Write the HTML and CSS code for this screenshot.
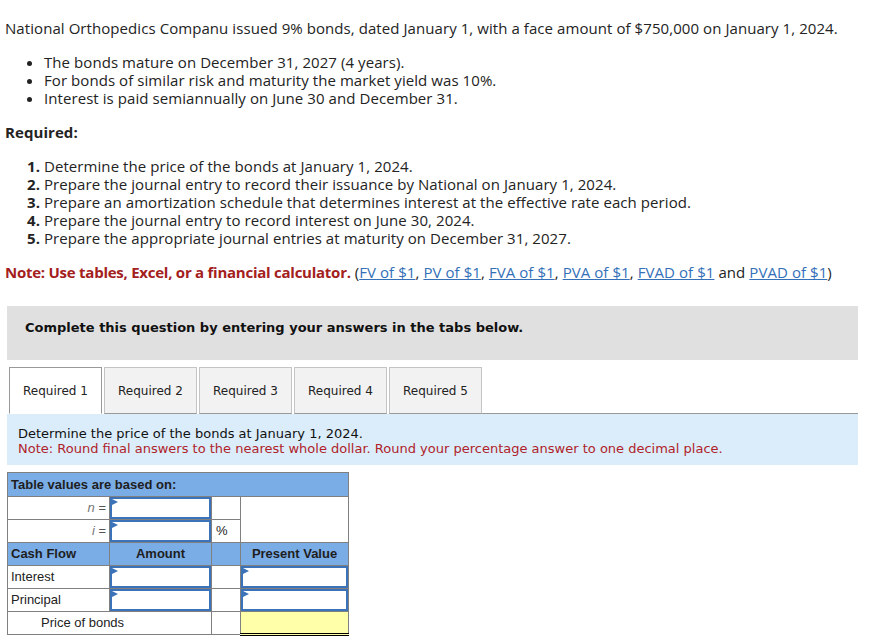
FILE: index.html
```html
<!DOCTYPE html>
<html>
<head>
<meta charset="utf-8">
<link rel="stylesheet" href="styles.css">
</head>
<body>
<div class="page">
  <p class="lead">National Orthopedics Companu issued 9% bonds, dated January 1, with a face amount of $750,000 on January 1, 2024.</p>
  <ul class="facts">
    <li>The bonds mature on December 31, 2027 (4 years).</li>
    <li>For bonds of similar risk and maturity the market yield was 10%.</li>
    <li>Interest is paid semiannually on June 30 and December 31.</li>
  </ul>
  <p class="req-title">Required:</p>
  <ol class="reqs">
    <li>Determine the price of the bonds at January 1, 2024.</li>
    <li>Prepare the journal entry to record their issuance by National on January 1, 2024.</li>
    <li>Prepare an amortization schedule that determines interest at the effective rate each period.</li>
    <li>Prepare the journal entry to record interest on June 30, 2024.</li>
    <li>Prepare the appropriate journal entries at maturity on December 31, 2027.</li>
  </ol>
  <p class="note"><strong class="note-red">Note: Use tables, Excel, or a financial calculator.</strong> (<a href="#">FV of $1</a>, <a href="#">PV of $1</a>, <a href="#">FVA of $1</a>, <a href="#">PVA of $1</a>, <a href="#">FVAD of $1</a> and <a href="#">PVAD of $1</a>)</p>
</div>

<div class="work">
  <div class="banner">Complete this question by entering your answers in the tabs below.</div>
  <div class="tabs">
    <div class="tab active">Required 1</div>
    <div class="tab">Required 2</div>
    <div class="tab">Required 3</div>
    <div class="tab">Required 4</div>
    <div class="tab">Required 5</div>
    <div class="tab-rest"></div>
  </div>
  <div class="instructions">
    <div>Determine the price of the bonds at January 1, 2024.</div>
    <div class="inst-note">Note: Round final answers to the nearest whole dollar. Round your percentage answer to one decimal place.</div>
  </div>

  <table class="pv">
    <colgroup>
      <col class="c1"><col class="c2"><col class="c3"><col class="c4">
    </colgroup>
    <tr class="head first"><td colspan="4">Table values are based on:</td></tr>
    <tr>
      <td class="lbl"><i>n</i> =</td>
      <td class="inp"><div class="box"></div></td>
      <td></td>
      <td rowspan="2"></td>
    </tr>
    <tr>
      <td class="lbl"><i>i</i> =</td>
      <td class="inp"><div class="box"></div></td>
      <td class="pct">%</td>
    </tr>
    <tr class="head">
      <td>Cash Flow</td>
      <td class="ctr">Amount</td>
      <td></td>
      <td class="ctr">Present Value</td>
    </tr>
    <tr>
      <td>Interest</td>
      <td class="inp"><div class="box"></div></td>
      <td></td>
      <td class="inp"><div class="box"></div></td>
    </tr>
    <tr>
      <td>Principal</td>
      <td class="inp"><div class="box"></div></td>
      <td></td>
      <td class="inp"><div class="box"></div></td>
    </tr>
    <tr>
      <td colspan="2" class="total-lbl">Price of bonds</td>
      <td></td>
      <td class="total"></td>
    </tr>
  </table>
</div>
</body>
</html>
```

FILE: styles.css
```css
html, body {
  margin: 0;
  padding: 0;
  background: #fff;
}
body {
  font-family: "Open Sans", "Liberation Sans", sans-serif;
  color: #232323;
  font-size: 15px;
  line-height: 18px;
}
.page {
  padding: 19px 5px 0 5px;
  letter-spacing: 0.07px;
}
.page p {
  margin: 0;
}
.facts, .reqs {
  margin: 16px 0;
  padding-left: 39px;
}
.reqs li::marker {
  font-weight: bold;
}
.req-title {
  font-weight: bold;
}
.note-red {
  color: #a3201c;
  letter-spacing: -0.25px;
}
.note a {
  color: #3470b8;
}

.work {
  margin: 25px 13px 0 7px;
  font-family: "DejaVu Sans", Verdana, sans-serif;
}
.banner {
  background: #e0e0e0;
  font-weight: bold;
  font-size: 13px;
  line-height: 16px;
  padding: 14px 18px 24px;
  color: #111;
}
.tabs {
  display: flex;
  gap: 2px;
  margin-top: 7px;
  padding-left: 2px;
  height: 47px;
}
.tab {
  width: 91px;
  border: 1px solid #c4c4c4;
  border-bottom: 1px solid #999;
  background: #f2f2f2;
  font-size: 12px;
  color: #222;
  display: flex;
  align-items: center;
  justify-content: center;
  box-sizing: content-box;
  height: 45px;
}
.tab.active {
  background: #fff;
  border-color: #999;
  border-bottom-color: #fff;
}
.tab-rest {
  flex: 1;
  border-bottom: 1px solid #999;
  margin-left: -2px;
}
.instructions {
  background: #dbedfa;
  font-size: 13px;
  line-height: 15px;
  padding: 12px 11px 9px;
  color: #111;
}
.inst-note {
  color: #b0232a;
}

.pv {
  margin-top: 7px;
  border-collapse: collapse;
  font-family: "Liberation Sans", Arial, sans-serif;
  font-size: 13px;
  color: #222;
  table-layout: fixed;
  width: 342px;
}
.c1 { width: 102px; }
.c2 { width: 102px; }
.c3 { width: 29px; }
.c4 { width: 108px; }
.pv td {
  border: 1px solid #808080;
  height: 23px;
  padding: 0 3px;
  box-sizing: border-box;
}
.pv tr.first td {
  height: 24px;
}
.pv tr.head td {
  background: #7aace6;
  font-weight: bold;
  color: #1e1e1e;
}
.pv .ctr {
  text-align: center;
}
.pv .lbl {
  text-align: right;
  color: #555;
}
.pv .lbl i {
  color: #777;
}
.pv td.inp {
  padding: 0;
}
.box {
  position: relative;
  height: 18px;
  border: 2px solid #3b72b8;
  background: #fff;
}
.box::before {
  content: "";
  position: absolute;
  left: 0;
  top: 0;
  border-left: 6px solid #3b72b8;
  border-top: 3px solid transparent;
  border-bottom: 3px solid transparent;
}
.pv .total-lbl {
  padding-left: 33px;
}
.pv td.total {
  background: #ffffaa;
  border-bottom: 3px double #000;
}
.pv .pct {
  padding-left: 4px;
}
```
